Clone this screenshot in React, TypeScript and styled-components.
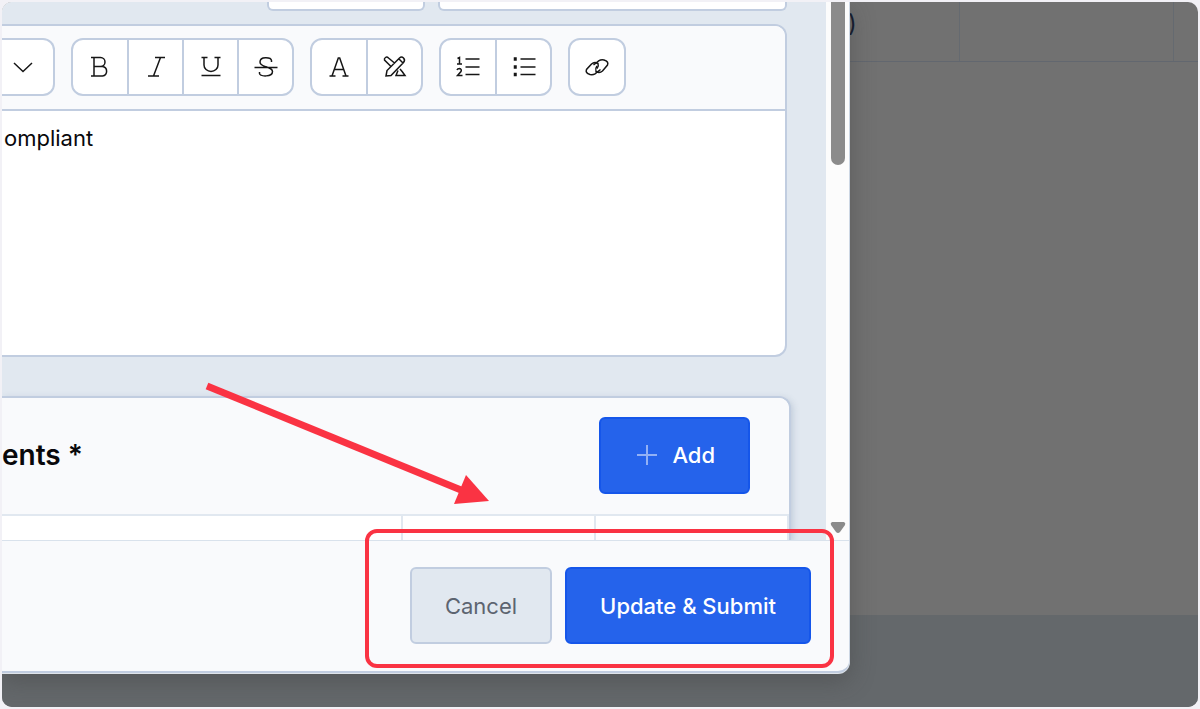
import React from 'react';
import styled, { createGlobalStyle } from 'styled-components';

const GlobalStyle = createGlobalStyle`
  *, *::before, *::after { box-sizing: border-box; }
  body { margin: 0; background: #f2f1f6; font-family: Inter, "Liberation Sans", sans-serif; color: #08080b; }
  h2, p { margin: 0; }
  button, input { font: inherit; color: inherit; }
`;

const line = '#c1cde0';
const soft = '#e1e8f0';
const accent = '#fa3343';

const Shell = styled.div`
  min-height: 100vh;
  padding: 2px;
  display: flex;
`;

const Frame = styled.div`
  flex: 1;
  display: grid;
  grid-template-columns: minmax(0, 1fr);
  border-radius: 10px;
  overflow: hidden;
`;

const Page = styled.div`
  grid-area: 1 / 1;
  display: flex;
  flex-direction: column;
  background: #717171;
`;

const PageHeadings = styled.div`
  height: 60px;
  display: flex;
  justify-content: flex-end;
  border-bottom: 1px solid #62676f;
`;

const PageHeading = styled.div<{ $width: number }>`
  width: ${(p) => p.$width}px;
  padding-top: 8px;
  border-left: 1px solid #656a70;
  font-size: 24px;
  line-height: 28px;
  color: #10182c;
`;

const PageFooter = styled.div`
  height: 92px;
  margin-top: auto;
  background: #64686b;
`;

const Dialog = styled.section`
  grid-area: 1 / 1;
  position: relative;
  margin: 0 348px 34px 0;
  display: flex;
  flex-direction: column;
  background: #f9fafc;
  border-right: 1px solid #cdd7e4;
  border-bottom: 2px solid ${line};
  border-bottom-right-radius: 12px;
  box-shadow: 0 1px 0 #dfe4ea, 0 8px 24px rgba(60, 60, 60, 0.4);
`;

const ScrollArea = styled.div`
  flex: 1;
  min-height: 0;
  display: flex;
`;

const Content = styled.div`
  flex: 1;
  min-width: 0;
  display: flex;
  flex-direction: column;
  overflow: hidden;
  background: ${soft};
`;

const Fields = styled.div`
  display: flex;
  justify-content: flex-end;
  gap: 13px;
  margin: 0 39px 13px 0;
`;

const Field = styled.input<{ $width: number }>`
  width: ${(p) => p.$width}px;
  height: 9px;
  padding: 0 12px;
  background: #fff;
  border: 2px solid ${line};
  border-top: 0;
  border-radius: 0 0 6px 6px;
  outline: 0;
`;

const Editor = styled.div`
  flex: 0 0 333px;
  margin-right: 39px;
  display: flex;
  flex-direction: column;
  border: 2px solid ${line};
  border-left: 0;
  border-radius: 0 12px 12px 0;
  background: #fff;
  overflow: hidden;
`;

const Toolbar = styled.div`
  display: flex;
  gap: 16px;
  padding: 12px 0 13px;
  background: #f9fafc;
  border-bottom: 2px solid ${line};
`;

const Group = styled.div<{ $open?: boolean }>`
  display: flex;
  height: 58px;
  background: #fff;
  border: 2px solid ${line};
  border-left-width: ${(p) => (p.$open ? 0 : 2)}px;
  border-radius: ${(p) => (p.$open ? '0 12px 12px 0' : '12px')};
`;

const Tool = styled.button`
  width: 55px;
  padding: 0;
  border: 0;
  background: none;
  display: flex;
  align-items: center;
  justify-content: center;
  &:not(:last-child) { border-right: 2px solid ${line}; }
  &:first-child:not(:last-child) { width: 56px; }
  &:last-child { width: 53px; }
  &:only-child { width: 54px; }
`;

const StyleMenu = styled(Tool)`
  &:only-child { width: 51px; }
  padding-right: 9px;
`;

const Text = styled.p`
  padding: 13px 2px;
  font-size: 22px;
  line-height: 28px;
`;

const Card = styled.div`
  flex: 1 0 143px;
  margin: 39px 35px 0 0;
  display: flex;
  flex-direction: column;
  border: 2px solid ${line};
  border-width: 2px 2px 0 0;
  border-top-right-radius: 12px;
  background: #fff;
  box-shadow: 2px 2px 6px rgba(120, 140, 170, 0.3);
`;

const CardHeader = styled.div`
  height: 118px;
  display: flex;
  align-items: center;
  justify-content: space-between;
  padding: 0 39px 2px 0;
  background: #f9fafc;
  border-top-right-radius: 10px;
  border-bottom: 2px solid ${soft};
`;

const CardTitle = styled.h2`
  font-size: 28px;
  line-height: 32px;
  font-weight: 600;
`;

const Columns = styled.div`
  flex: 1;
  display: flex;
`;

const Column = styled.div<{ $grow?: boolean }>`
  flex: ${(p) => (p.$grow ? '1' : '0 0 193px')};
  border-right: 2px solid ${soft};
`;

const Button = styled.button<{ $quiet?: boolean }>`
  height: 77px;
  padding: 0 33px;
  display: flex;
  align-items: center;
  gap: 12px;
  border: 2px solid ${(p) => (p.$quiet ? line : '#1556ea')};
  border-radius: 6px;
  background: ${(p) => (p.$quiet ? soft : '#2563eb')};
  color: ${(p) => (p.$quiet ? '#5c6470' : '#fff')};
  font-size: 22px;
  line-height: 28px;
  font-weight: ${(p) => (p.$quiet ? 400 : 500)};
  white-space: nowrap;
`;

const Gutter = styled.div`
  width: 23px;
  display: flex;
  flex-direction: column;
  align-items: center;
  justify-content: space-between;
  padding-bottom: 6px;
  background: #fcfcfc;
`;

const Thumb = styled.div`
  width: 14px;
  height: 163px;
  border-radius: 0 0 7px 7px;
  background: #8b8b8b;
`;

const Actions = styled.div`
  display: flex;
  justify-content: flex-end;
  gap: 13px;
  padding: 26px 38px 27px;
  border-top: 1px solid #d9e2ec;
`;

const Highlight = styled.div`
  position: absolute;
  right: 15px;
  bottom: 3px;
  width: 469px;
  height: 139px;
  border: 4px solid ${accent};
  border-radius: 12px;
  pointer-events: none;
`;

const Arrow = styled.svg`
  position: absolute;
  right: 358px;
  bottom: 166px;
  pointer-events: none;
`;

const Icon = ({ children }: { children: React.ReactNode }) => (
  <svg width="26" height="26" viewBox="0 0 26 26" fill="none" stroke="#161616" strokeWidth="1.5" aria-hidden="true">
    {children}
  </svg>
);

const icons = {
  bold: <path d="M4 3.500H13.500A4.500 4.500 0 0 1 13.500 12.500H7M13.500 12.500H15.500A4.800 4.800 0 0 1 15.500 22H4M7 3.500V22" />,
  italic: <path d="M12 3.500H22M5 22H16M17.500 3.500L10.500 22" />,
  underline: <path d="M3.500 3.500H9.500M16.500 3.500H22.500M6 3.500V11A6.500 6 0 0 0 20 11V3.500M3.500 21.500H22.500" />,
  strike: <path d="M18.500 8V6.500C18 3 7 2 7 8C7 11 10.500 12 13 12.800C17 14 19.500 15 19.500 17.500C19.500 23.500 7 22.500 6.500 19.500V18M1.500 13.500H24.500" />,
  color: <path d="M3.500 22H9.500M16.500 22H22.500M6 22L12.300 4H13.700L20 22M8.500 15.500H17.500" />,
  clear: (
    <path d="M4 22L5 16.500L17.500 4Q19.500 2 21.500 4Q23.500 6 21.500 8.500L9 21.500L4 22ZM17 5L21 9M8.500 12L2.500 6Q2 4.500 3.500 3.500Q5 2.500 6.500 4L12.500 9M16 16.500L14 21.500H23L20.500 18L18 15" />
  ),
  ordered: (
    <>
      <path d="M10.500 5H24.500M10.500 13H24.500M10.500 20.500H24.500" />
      <path d="M2.500 4.500L4.500 3.500V10M2 10H7M2 16Q2.500 14.500 4.500 14.500Q7 15 6 17.500L2.500 21.500H7.500" />
    </>
  ),
  bullets: (
    <>
      <path d="M9.500 5H24.500M9.500 13H24.500M9.500 20.500H24.500" />
      <path d="M3.500 4H5V6H3.500ZM3.500 12H5V14H3.500ZM3.500 19.500H5V21.500H3.500Z" />
    </>
  ),
  link: (
    <>
      <path d="M9.500 11L15 6.700Q17 5.500 20 6Q25 7.500 23.500 11L18.500 17Q15.500 19.500 12 17.500Q11 14.500 13 12" />
      <path d="M16.500 15.500L11 19.800Q9 21 6 20.500Q1 19 2.500 15.500L7.500 10Q10.500 7.500 14 9.500Q15 12 13 14.500" />
    </>
  ),
};

const toolGroups: { name: string; icon: React.ReactNode }[][] = [
  [
    { name: 'Bold', icon: icons.bold },
    { name: 'Italic', icon: icons.italic },
    { name: 'Underline', icon: icons.underline },
    { name: 'Strikethrough', icon: icons.strike },
  ],
  [
    { name: 'Text color', icon: icons.color },
    { name: 'Clear formatting', icon: icons.clear },
  ],
  [
    { name: 'Numbered list', icon: icons.ordered },
    { name: 'Bulleted list', icon: icons.bullets },
  ],
  [{ name: 'Link', icon: icons.link }],
];

export default function App() {
  return (
    <Shell>
      <GlobalStyle />
      <Frame>
        <Page>
          <PageHeadings>
            <PageHeading $width={112}>)</PageHeading>
            <PageHeading $width={214} />
            <PageHeading $width={25} />
          </PageHeadings>
          <PageFooter />
        </Page>
        <Dialog>
          <ScrollArea>
            <Content>
              <Fields>
                <Field $width={158} aria-label="First field" />
                <Field $width={349} aria-label="Second field" />
              </Fields>
              <Editor>
                <Toolbar>
                  <Group $open>
                    <StyleMenu aria-label="Text style">
                      <Icon><path d="M4 9L13 17.500L22 9" /></Icon>
                    </StyleMenu>
                  </Group>
                  {toolGroups.map((tools) => (
                    <Group key={tools[0].name}>
                      {tools.map((tool) => (
                        <Tool key={tool.name} aria-label={tool.name}>
                          <Icon>{tool.icon}</Icon>
                        </Tool>
                      ))}
                    </Group>
                  ))}
                </Toolbar>
                <Text>ompliant</Text>
              </Editor>
              <Card>
                <CardHeader>
                  <CardTitle>ents *</CardTitle>
                  <Button>
                    <svg width="26" height="26" viewBox="0 0 26 26" stroke="#92b1f5" strokeWidth="2" aria-hidden="true">
                      <path d="M13 3V23M3 13H23" />
                    </svg>
                    Add
                  </Button>
                </CardHeader>
                <Columns>
                  <Column $grow />
                  <Column />
                  <Column />
                </Columns>
              </Card>
            </Content>
            <Gutter>
              <Thumb />
              <svg width="16" height="12" viewBox="0 0 16 12" fill="#8b8b8b" aria-hidden="true">
                <path d="M2 0H14Q16 1 15 3L10 10Q8 12 6 10L1 3Q0 1 2 0Z" />
              </svg>
            </Gutter>
          </ScrollArea>
          <Actions>
            <Button $quiet>Cancel</Button>
            <Button>Update &amp; Submit</Button>
          </Actions>
          <Highlight />
          <Arrow width="290" height="130" viewBox="0 0 290 130" aria-hidden="true">
            <path d="M6 11L260 115" stroke={accent} strokeWidth="7" />
            <path d="M288 126L265 100L253 129Z" fill={accent} />
          </Arrow>
        </Dialog>
      </Frame>
    </Shell>
  );
}
